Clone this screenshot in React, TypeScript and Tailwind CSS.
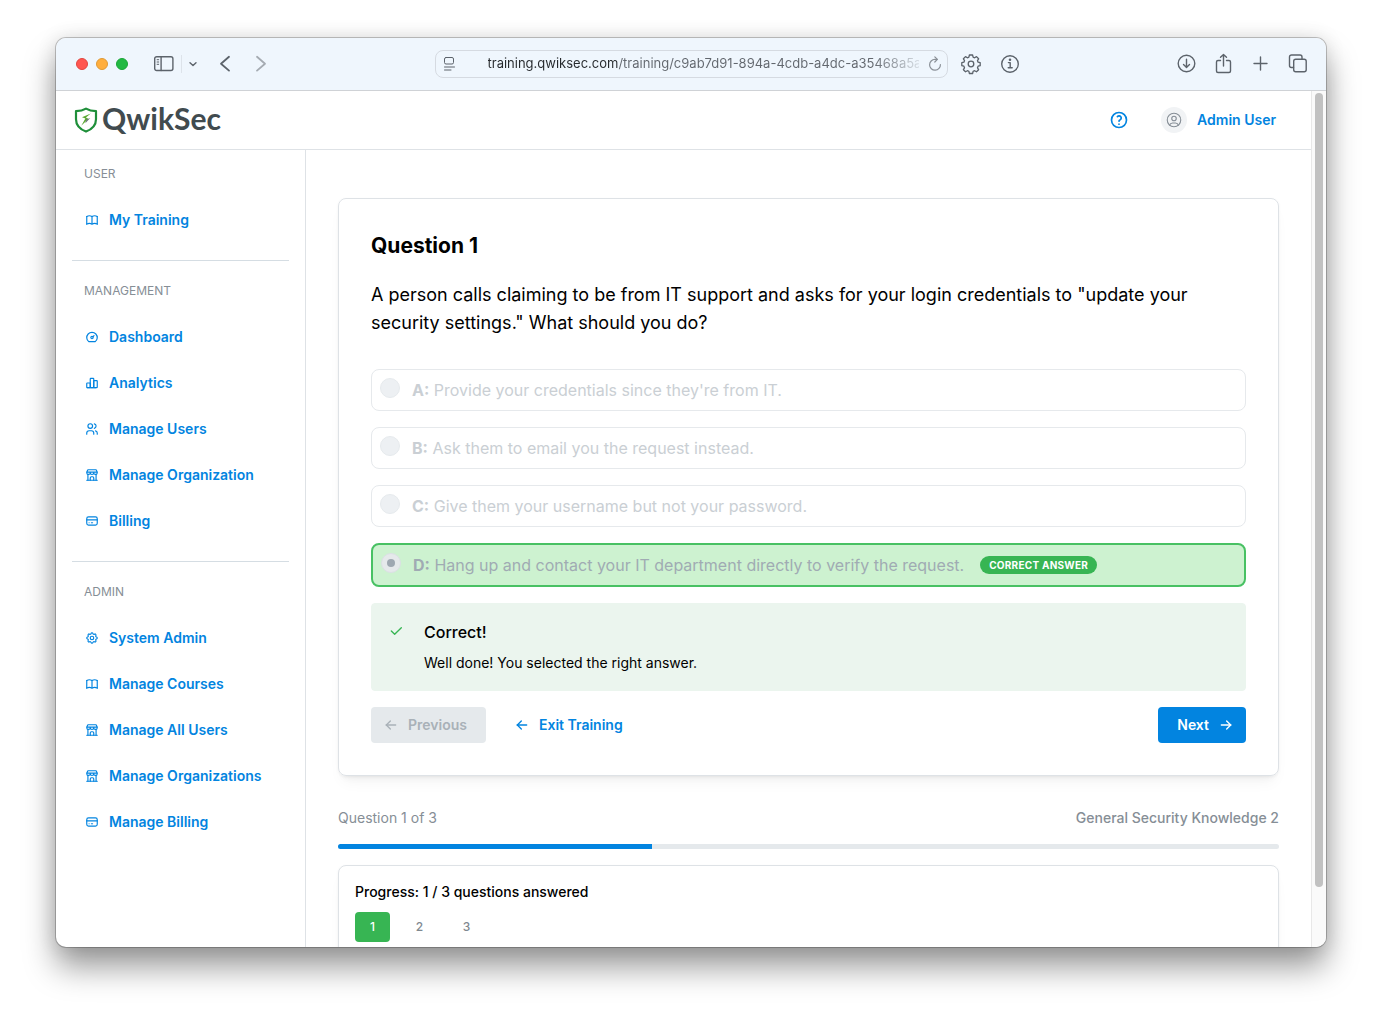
import React, { useState } from 'react';

import { IconType } from 'react-icons';
import {
	TbArrowLeft,
	TbArrowRight,
	TbBook,
	TbBuildingStore,
	TbChartBar,
	TbCheck,
	TbCreditCard,
	TbDashboard,
	TbHelp,
	TbSettings,
	TbUserCircle,
	TbUsers,
} from 'react-icons/tb';

interface NavItem {
	label: string;
	icon: IconType;
}

interface NavSection {
	title: string;
	items: NavItem[];
}

const sections: NavSection[] = [
	{ title: 'USER', items: [{ label: 'My Training', icon: TbBook }] },
	{
		title: 'MANAGEMENT',
		items: [
			{ label: 'Dashboard', icon: TbDashboard },
			{ label: 'Analytics', icon: TbChartBar },
			{ label: 'Manage Users', icon: TbUsers },
			{ label: 'Manage Organization', icon: TbBuildingStore },
			{ label: 'Billing', icon: TbCreditCard },
		],
	},
	{
		title: 'ADMIN',
		items: [
			{ label: 'System Admin', icon: TbSettings },
			{ label: 'Manage Courses', icon: TbBook },
			{ label: 'Manage All Users', icon: TbBuildingStore },
			{ label: 'Manage Organizations', icon: TbBuildingStore },
			{ label: 'Manage Billing', icon: TbCreditCard },
		],
	},
];

const options = [
	{ key: 'A', text: "Provide your credentials since they're from IT." },
	{ key: 'B', text: 'Ask them to email you the request instead.' },
	{ key: 'C', text: 'Give them your username but not your password.' },
	{ key: 'D', text: 'Hang up and contact your IT department directly to verify the request.' },
];

const CORRECT = 'D';
const TOTAL = 3;

const iconProps = {
	fill: 'none',
	stroke: 'currentColor',
	strokeWidth: 1.4,
	strokeLinecap: 'round',
	strokeLinejoin: 'round',
} as const;

const BrowserBar: React.FC = () => {
	const [url, setUrl] = useState<string>('training.qwiksec.com/training/c9ab7d91-894a-4cdb-a4dc-a35468a5a7e2');

	return (
		<div className="grid h-[53px] shrink-0 grid-cols-[1fr_minmax(0,513px)_1fr] items-center border-b border-[#cfd2d6] bg-[#eff6fd] text-[#5c636b]">
			<div className="flex items-center pl-5">
				<div className="flex gap-2">
					<span className="size-3 rounded-full border border-[#e2463f] bg-[#ff5650]" />
					<span className="size-3 rounded-full border border-[#e09a35] bg-[#ffae3d]" />
					<span className="size-3 rounded-full border border-[#1aa637] bg-[#22b943]" />
				</div>
				<button aria-label="Toggle sidebar" className="ml-[25px]">
					<svg width="22" height="18" viewBox="0 0 22 18" {...iconProps}>
						<rect x="1.7" y="1.7" width="18.2" height="13.8" rx="2" />
						<path d="M8.1 1.700v13.800" />
						<path d="M4.100 4.700h1.600M4.100 7h1.600M4.100 9.300h1.600" strokeWidth="1" />
					</svg>
				</button>
				<span className="ml-1.5 h-[18px] w-px bg-[#dde3ea]" />
				<button aria-label="Tab groups" className="ml-1.5">
					<svg width="10" height="10" viewBox="0 0 10 10" {...iconProps}>
						<path d="M2 3.800l3 2.800 3-2.800" />
					</svg>
				</button>
				<button aria-label="Back" className="ml-[18px]">
					<svg width="18" height="18" viewBox="0 0 18 18" {...iconProps} strokeWidth={1.8}>
						<path d="M13 1.800L5 8.700l8 6.900" />
					</svg>
				</button>
				<button aria-label="Forward" className="ml-[18px] text-[#a5abb2]">
					<svg width="18" height="18" viewBox="0 0 18 18" {...iconProps} strokeWidth={1.8}>
						<path d="M5 1.800l8 6.900-8 6.900" />
					</svg>
				</button>
			</div>
			<div className="flex h-7 items-center rounded-lg border border-[#d5dae1] pr-1 pl-1.5">
				<svg width="16" height="18" viewBox="0 0 16 18" {...iconProps} strokeWidth={1}>
					<rect x="2.500" y="2.500" width="9" height="6.500" rx="1.500" />
					<path d="M2.500 12h10M2.500 15h6.500" />
				</svg>
				<input
					aria-label="Address"
					value={url}
					onChange={e => setUrl(e.target.value)}
					className="ml-[30px] min-w-0 flex-1 bg-[linear-gradient(to_right,#26292d_0,#26292d_129px,#62676e_131px,#62676e_385px,transparent_440px)] bg-clip-text text-[13px] text-transparent outline-none"
				/>
				<button aria-label="Reload" className="ml-2 text-[#8a9097]">
					<svg width="16" height="18" viewBox="0 0 16 18" {...iconProps} strokeWidth={1.2}>
						<path d="M13.400 9.500A5.400 5.400 0 1 1 8 4.400h2" />
						<path d="M7.800 1.800l2.600 2.600-2.600 2.600" />
					</svg>
				</button>
			</div>
			<div className="flex items-center justify-between pr-[17px] pl-3">
				<div className="flex gap-[17px]">
					<button aria-label="Settings">
						<svg width="22" height="22" viewBox="0 0 22 22" {...iconProps} strokeWidth={1.3}>
							<path d="M9.400 2h3.200l.5 2.200 1.500.6 1.900-1.200 2.100 2.200-1.100 1.900.6 1.500 2.100.5v3l-2.100.5-.6 1.600 1.100 1.900-2.100 2.100-1.900-1.100-1.500.6-.5 2.200H9.400l-.5-2.200-1.500-.6-1.900 1.100-2.100-2.100 1.100-1.900-.6-1.600-2.100-.5v-3l2.100-.5.6-1.500-1.100-1.900 2.100-2.200 1.900 1.200 1.500-.6z" />
							<circle cx="11" cy="11" r="2.800" />
						</svg>
					</button>
					<button aria-label="Page info">
						<svg width="22" height="22" viewBox="0 0 22 22" {...iconProps}>
							<circle cx="11" cy="11" r="8.300" />
							<path d="M9.400 9.600h1.800v5M9.200 14.800h4" />
							<circle cx="11" cy="6.800" r=".6" fill="currentColor" />
						</svg>
					</button>
				</div>
				<div className="flex gap-[15px]">
					<button aria-label="Downloads">
						<svg width="22" height="22" viewBox="0 0 22 22" {...iconProps}>
							<circle cx="10.500" cy="10.500" r="8.300" />
							<path d="M10.500 6.300v8M7.500 11.500l3 3 3-3" />
						</svg>
					</button>
					<button aria-label="Share">
						<svg width="22" height="22" viewBox="0 0 22 22" {...iconProps}>
							<path d="M7.500 7.500H5A1.500 1.500 0 0 0 3.500 9v9A1.500 1.500 0 0 0 5 19.500h11a1.500 1.500 0 0 0 1.500-1.500V9A1.500 1.500 0 0 0 16 7.500h-2.500" />
							<path d="M10.500 13V1.500M7.500 4.300l3-2.800 3 2.800" />
						</svg>
					</button>
					<button aria-label="New tab">
						<svg width="22" height="22" viewBox="0 0 22 22" {...iconProps}>
							<path d="M10.500 4v13M4 10.500h13" />
						</svg>
					</button>
					<button aria-label="Tab overview">
						<svg width="22" height="22" viewBox="0 0 22 22" {...iconProps}>
							<rect x="6.700" y="6.200" width="12.500" height="12.500" rx="2" />
							<path d="M6.500 14.500H4.500a2 2 0 0 1-2-2V4a2 2 0 0 1 2-2H13a2 2 0 0 1 2 2v2" />
						</svg>
					</button>
				</div>
			</div>
		</div>
	);
};

const Logo: React.FC = () => (
	<a href="#home" className="flex items-center gap-1">
		<svg width="24" height="26" viewBox="0 0 24 26">
			<path
				d="M12 1.600c3 1.800 6.500 2.500 10 2.600v8c0 5.600-4 10-10 12.400C6 22.200 2 17.800 2 12.200v-8c3.500-.1 7-.8 10-2.600z"
				fill="#fff"
				stroke="#1f8f3a"
				strokeWidth="2.200"
				strokeLinejoin="round"
			/>
			<path d="M16.800 6.500L8 10.200l3.400 1.200-4.200 7.400 7.300-7-2.600-1.400z" fill="#5aa832" />
			<path d="M12.500 12.500l3.800-1.500-5 5.200z" fill="#6c7478" />
		</svg>
		<span className="pb-1 font-['Lato'] text-[30px] leading-9 font-bold text-[#414b4f]">QwikSec</span>
	</a>
);

const Header: React.FC = () => (
	<header className="flex h-[59px] shrink-0 items-center justify-between border-b border-[#dee2e6] pr-[35px] pl-[18px]">
		<Logo />
		<div className="flex items-center text-[#0284e0]">
			<button aria-label="Help">
				<TbHelp size={20} />
			</button>
			<button className="ml-8 flex items-center gap-[10px] text-sm font-semibold">
				<span className="flex size-[26px] items-center justify-center rounded-full bg-[#f1f3f5] text-[#868e96]">
					<TbUserCircle size={18} strokeWidth={1.5} />
				</span>
				Admin User
			</button>
		</div>
	</header>
);

const Sidebar: React.FC = () => (
	<nav className="w-[250px] shrink-0 border-r border-[#dee2e6] px-4 pt-[14px]">
		{sections.map((section, index) => (
			<div key={section.title} className={index > 0 ? 'mt-[17px] border-t border-[#d5dde3] pt-5' : ''}>
				<p className="px-3 text-xs leading-[19px] text-[#868e96]">{section.title}</p>
				<ul className="mt-[14px]">
					{section.items.map(({ label, icon: Icon }) => (
						<li key={label}>
							<a
								href="#nav"
								className="flex h-[46px] items-center gap-[10px] px-[13px] text-sm font-semibold text-[#0284e0]"
							>
								<Icon size={14} />
								{label}
							</a>
						</li>
					))}
				</ul>
			</div>
		))}
	</nav>
);

const QuestionCard: React.FC = () => (
	<section className="rounded-lg border border-[#dee2e6] p-8 shadow-[0_1px_3px_rgba(0,0,0,0.05),0_10px_15px_-5px_rgba(0,0,0,0.05),0_7px_7px_-5px_rgba(0,0,0,0.04)]">
		<h1 className="text-[21px] leading-[30px] font-bold">Question 1</h1>
		<p className="mt-5 text-lg leading-7">
			A person calls claiming to be from IT support and asks for your login credentials to &quot;update your security
			settings.&quot; What should you do?
		</p>
		<div className="mt-8 flex flex-col gap-4">
			{options.map(({ key, text }) => {
				const correct = key === CORRECT;
				return (
					<label
						key={key}
						className={
							correct
								? 'flex items-start gap-3 rounded-lg border-2 border-[#48c163] bg-[#cdf2d0] p-2 text-[#a0abb3]'
								: 'flex items-start gap-3 rounded-lg border border-[#e6e9ec] p-2 text-[#cacfd4]'
						}
					>
						<input
							type="radio"
							name="answer"
							disabled
							defaultChecked={correct}
							className="flex size-5 shrink-0 appearance-none items-center justify-center rounded-full border border-[#e6eaed] bg-[#edf0f3] checked:border-[#dbe0e4] checked:bg-[#e5e9eb] checked:before:size-2 checked:before:rounded-full checked:before:bg-[#9ea8b1]"
						/>
						<span className="leading-6">
							<b className="font-bold">{key}:</b> {text}
						</span>
						{correct && (
							<span className="ml-1 self-center rounded-full bg-[#37b553] px-[9px] text-[10px] leading-[18px] font-bold tracking-wide text-white">
								CORRECT ANSWER
							</span>
						)}
					</label>
				);
			})}
		</div>
		<div className="mt-4 flex gap-5 rounded border border-[#ebf5ee] bg-[#ebf5ee] p-4">
			<TbCheck size={16} className="mt-[3px] shrink-0 text-[#37b553]" />
			<div>
				<p className="leading-6 font-medium">Correct!</p>
				<p className="mt-2 text-sm leading-[22px]">Well done! You selected the right answer.</p>
			</div>
		</div>
		<div className="mt-4 flex items-center gap-4 text-sm font-semibold">
			<button disabled className="flex h-9 items-center gap-[9px] rounded bg-[#e5e9ec] pr-[19px] pl-3 text-[#a9b1b8]">
				<TbArrowLeft size={16} />
				Previous
			</button>
			<button className="flex h-9 items-center gap-[9px] rounded pr-[19px] pl-3 text-[#0284e0]">
				<TbArrowLeft size={16} />
				Exit Training
			</button>
			<button className="ml-auto flex h-9 items-center gap-[9px] rounded bg-[#0284e0] pr-3 pl-[19px] text-white">
				Next
				<TbArrowRight size={16} />
			</button>
		</div>
	</section>
);

const Progress: React.FC = () => {
	const [current, setCurrent] = useState<number>(1);

	return (
		<>
			<div className="mt-8 flex justify-between text-sm leading-5 text-[#868e96]">
				<span>Question {current} of 3</span>
				<span className="font-medium">General Security Knowledge 2</span>
			</div>
			<div className="mt-4 h-[5px] overflow-hidden rounded-full bg-[#e5e9ec]">
				<div className="h-full bg-[#0284e0]" style={{ width: `${(current / TOTAL) * 100}%` }} />
			</div>
			<section className="mt-4 rounded-lg border border-[#dee2e6] p-4 shadow-[0_1px_3px_rgba(0,0,0,0.05),0_10px_15px_-5px_rgba(0,0,0,0.05)]">
				<p className="text-sm leading-5 font-medium">Progress: 1 / 3 questions answered</p>
				<div className="mt-[10px] flex gap-3">
					{[1, 2, 3].map(n => (
						<button
							key={n}
							onClick={() => setCurrent(n)}
							className={
								n === 1
									? 'h-[30px] w-[35px] rounded bg-[#37b553] text-xs font-medium text-white'
									: 'h-[30px] w-[35px] rounded text-xs font-medium text-[#7f8890]'
							}
						>
							{n}
						</button>
					))}
				</div>
			</section>
		</>
	);
};

const App: React.FC = () => (
	<div className="h-screen overflow-hidden bg-white px-14 pt-[38px] pb-[74px] font-['Inter',sans-serif] text-black">
		<div className="flex h-full flex-col overflow-hidden rounded-[10px] bg-white shadow-[0_0_0_1px_rgba(0,0,0,0.22),0_20px_32px_rgba(0,0,0,0.4),0_0_20px_rgba(0,0,0,0.12)]">
			<BrowserBar />
			<div className="flex min-h-0 flex-1">
				<div className="flex min-w-0 flex-1 flex-col">
					<Header />
					<div className="flex min-h-0 flex-1">
						<Sidebar />
						<main className="min-w-0 flex-1 overflow-hidden px-8 pt-12">
							<QuestionCard />
							<Progress />
						</main>
					</div>
				</div>
				<div className="w-[15px] shrink-0 border-l border-[#e8e8e8] bg-[#fafafa] px-[3px] pt-0.5">
					<div className="h-[93%] rounded-full bg-[#c1c1c1]" />
				</div>
			</div>
		</div>
	</div>
);

export default App;
